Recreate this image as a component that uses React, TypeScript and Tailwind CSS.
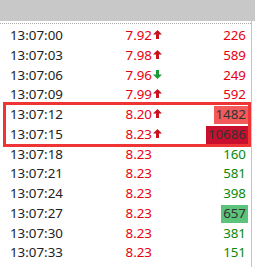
type Tick = {
  time: string;
  price: string;
  dir?: "up" | "down";
  vol: string;
  volClass: string;
};

const ticks: Tick[] = [
  { time: "13:07:00", price: "7.92", dir: "up", vol: "226", volClass: "text-[#e60012]" },
  { time: "13:07:03", price: "7.98", dir: "up", vol: "589", volClass: "text-[#e60012]" },
  { time: "13:07:06", price: "7.96", dir: "down", vol: "249", volClass: "text-[#e60012]" },
  { time: "13:07:09", price: "7.99", dir: "up", vol: "592", volClass: "text-[#e60012]" },
  { time: "13:07:12", price: "8.20", dir: "up", vol: "1482", volClass: "bg-[#f25a5a] text-[#333333]" },
  { time: "13:07:15", price: "8.23", dir: "up", vol: "10686", volClass: "bg-[#c8102e] text-[#333333]" },
  { time: "13:07:18", price: "8.23", vol: "160", volClass: "text-[#0a8a0a]" },
  { time: "13:07:21", price: "8.23", vol: "581", volClass: "text-[#0a8a0a]" },
  { time: "13:07:24", price: "8.23", vol: "398", volClass: "text-[#0a8a0a]" },
  { time: "13:07:27", price: "8.23", vol: "657", volClass: "bg-[#5bc47a] text-[#333333]" },
  { time: "13:07:30", price: "8.23", vol: "381", volClass: "text-[#0a8a0a]" },
  { time: "13:07:33", price: "8.23", vol: "151", volClass: "text-[#0a8a0a]" },
];

function Arrow({ dir }: { dir: "up" | "down" }) {
  return (
    <svg
      width="9"
      height="9"
      viewBox="0 0 9 9"
      className={dir === "down" ? "rotate-180" : ""}
    >
      <path
        d="M4.5 0 L9 4.5 L6 4.5 L6 9 L3 9 L3 4.5 L0 4.5 Z"
        fill={dir === "up" ? "#c8101e" : "#1e9a3c"}
      />
    </svg>
  );
}

export default function App() {
  return (
    <div
      className="relative w-[255px] h-[267px] overflow-hidden bg-white"
      style={{ fontFamily: '"Noto Sans", "Open Sans", sans-serif' }}
    >
      <div className="h-[21px] bg-[#c8c8c8]" />
      <div className="w-[252px] h-[246px] border-r border-[#c4c4c4] pt-[2px]">
        <div className="border-t border-dotted border-[#a8a8a8] pt-[2px]">
          {ticks.map((t) => (
            <div
              key={t.time}
              className="flex items-center h-[19.75px] pl-[10px] pr-[3px] text-[13.33px] leading-none"
            >
              <span className="w-[142px] flex justify-between text-[#222222]">
                <span>{t.time}</span>
                <span className="text-[#e60012]">{t.price}</span>
              </span>
              <span className="w-[11px] pl-[1px] flex items-start self-start pt-[4px]">
                {t.dir && <Arrow dir={t.dir} />}
              </span>
              <span className="flex-1 flex justify-end">
                <span className={`h-[18px] flex items-center px-[2px] ${t.volClass}`}>
                  {t.vol}
                </span>
              </span>
            </div>
          ))}
        </div>
      </div>
      <div className="absolute left-[3px] top-[102px] w-[248px] h-[45px] border-[3px] border-[#ee3434]" />
    </div>
  );
}
